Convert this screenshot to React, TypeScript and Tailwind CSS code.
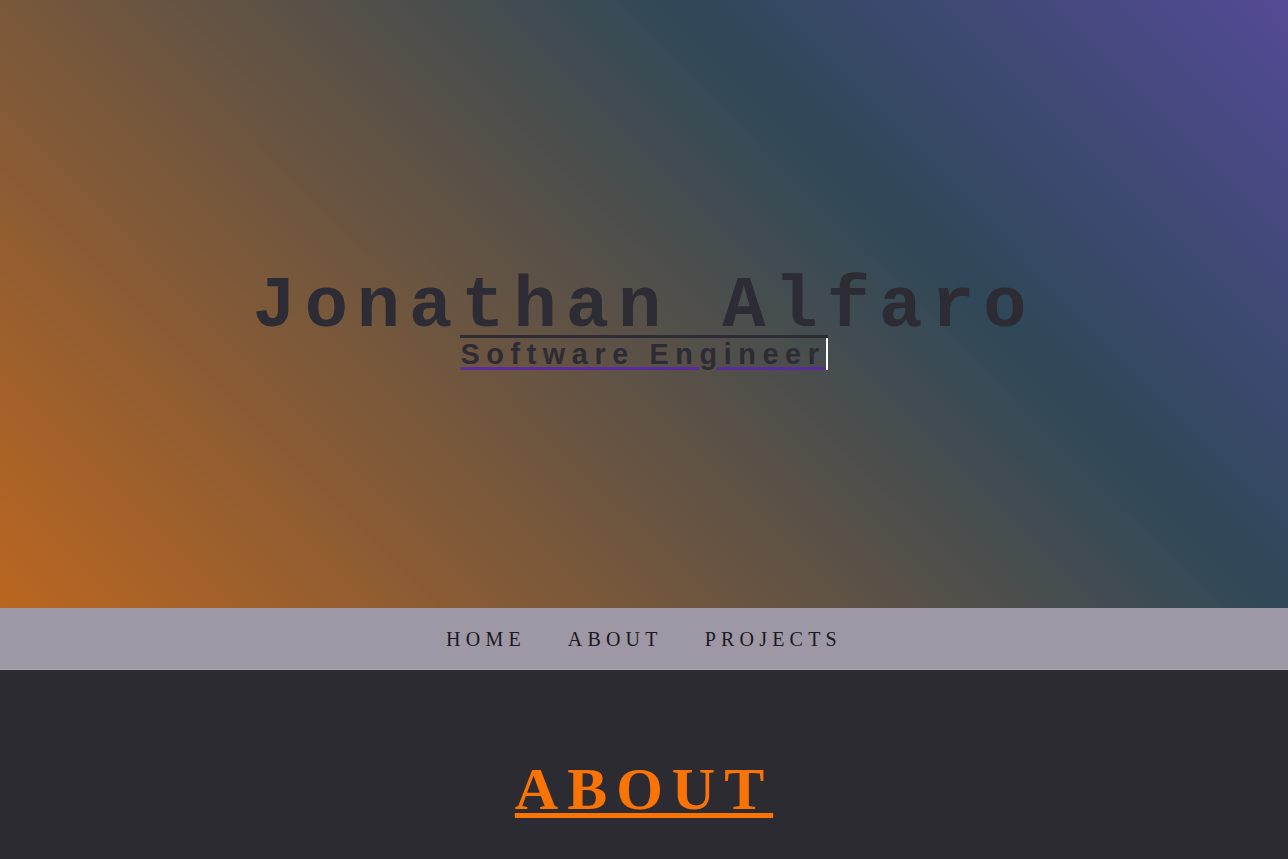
const navItems = ["Home", "About", "Projects"];

export default function App() {
  return (
    <div className="min-h-screen w-full bg-[#2d2b32]">
      <header className="flex h-[608px] w-full flex-col items-center justify-center pt-[41px] bg-[linear-gradient(45deg,#bb6620_0%,#2f4858_68%,#534a96_100%)]">
        <h1 className="font-['Liberation_Mono',monospace] text-[72px] font-bold leading-[56px] tracking-[9px] text-[#2d2b33]">
          Jonathan Alfaro
        </h1>
        <div className="border-t-[3px] border-[#2d2b33]">
          <p className="whitespace-nowrap border-r-2 border-white font-['Liberation_Sans',Arial,sans-serif] text-[28.8px] font-bold leading-[32px] tracking-[6.6px] text-[#2d2b33] underline decoration-[#5b2a9c] decoration-[3px] underline-offset-[3px]">
            Software Engineer
          </p>
        </div>
      </header>

      <nav className="flex h-[62px] w-full items-center justify-center border-b border-[#aaa4b0] bg-[#9e97a6]">
        {navItems.map((item) => (
          <a
            key={item}
            href="#"
            className="px-[21px] font-['Liberation_Serif','Times_New_Roman',serif] text-[20px] uppercase tracking-[5.2px] text-[#1b1a20]"
          >
            {item}
          </a>
        ))}
      </nav>

      <section className="flex flex-col items-center pt-[89px] pb-24">
        <h2 className="font-['Liberation_Serif','Times_New_Roman',serif] text-[60px] font-bold leading-none tracking-[0.15em] text-[#f97306] underline decoration-[5px] underline-offset-[4px]">
          ABOUT
        </h2>
      </section>
    </div>
  );
}
